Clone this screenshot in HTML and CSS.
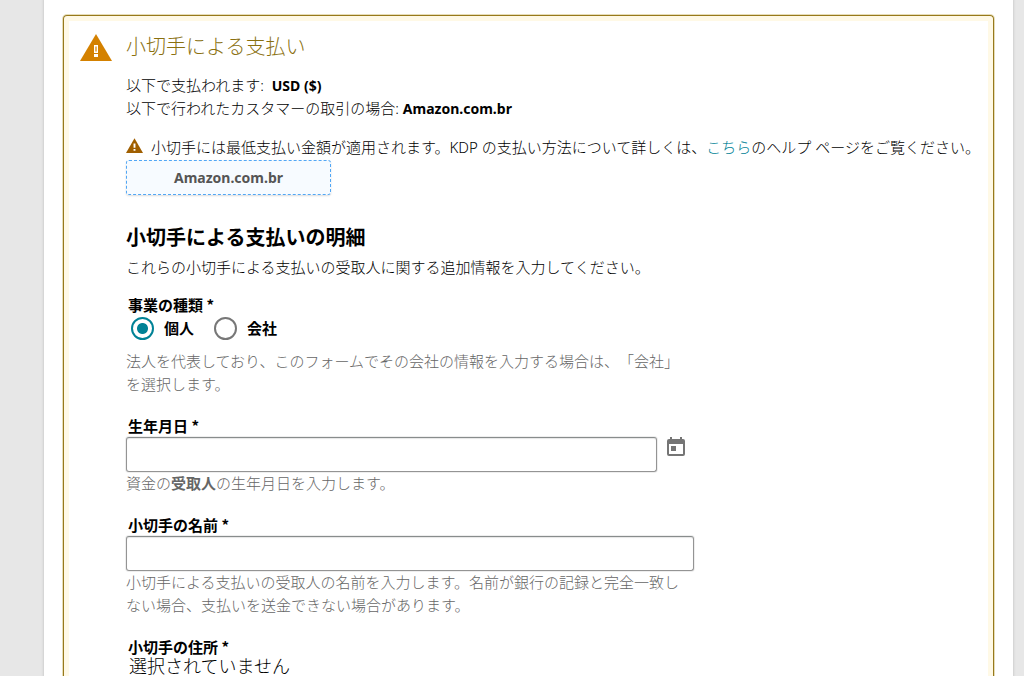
FILE: index.html
```html
<!DOCTYPE html>
<html lang="ja">
<head>
<meta charset="utf-8">
<meta name="viewport" content="width=device-width, initial-scale=1">
<title>小切手による支払い</title>
<link rel="stylesheet" href="styles.css">
</head>
<body>
<main class="sheet">
  <section class="card">
    <svg class="card-icon" viewBox="0 0 32 28" aria-hidden="true">
      <path class="amber" d="M16 0 32 27H0z"/>
      <path class="mark" fill-rule="evenodd" d="M14 11h4v8h-4zM15.4 12.5v5h1.2v-5zM14 20h4v3h-4z"/>
    </svg>
    <div class="content">
      <h1 class="title">小切手による支払い</h1>
      <p class="text">以下で支払われます:&nbsp; <strong>USD ($)</strong></p>
      <p class="text">以下で行われたカスタマーの取引の場合: <strong>Amazon.com.br</strong></p>
      <div class="notice">
        <svg class="notice-icon" viewBox="0 0 32 28" aria-hidden="true">
          <path class="brown" d="M16 0.5 32 28H0z"/>
          <path class="mark" d="M14.2 10h3.6v8h-3.6zM14.2 20.5h3.6V24h-3.6z"/>
        </svg>
        <p class="text">小切手には最低支払い金額が適用されます。KDP の支払い方法について詳しくは、<a class="link" href="#">こちら</a>のヘルプ ページをご覧ください。</p>
      </div>
      <div class="market">Amazon.com.br</div>

      <h2 class="subtitle">小切手による支払いの明細</h2>
      <p class="text">これらの小切手による支払いの受取人に関する追加情報を入力してください。</p>

      <form class="form">
        <div class="field" role="radiogroup" aria-labelledby="type-label">
          <span class="label" id="type-label">事業の種類 *</span>
          <div class="radios">
            <label class="option"><input class="radio" type="radio" name="type" checked>個人</label>
            <label class="option"><input class="radio" type="radio" name="type">会社</label>
          </div>
          <p class="hint">法人を代表しており、このフォームでその会社の情報を入力する場合は、「会社」を選択します。</p>
        </div>
        <div class="field">
          <label class="label" for="birth">生年月日 *</label>
          <div class="date-row">
            <input class="input" id="birth" type="text">
            <button class="calendar" type="button" aria-label="カレンダー">
              <svg class="calendar-icon" viewBox="0 0 18 20" aria-hidden="true">
                <path d="M3 0h2v2h8V0h2v2h1a2 2 0 0 1 2 2v13a2 2 0 0 1-2 2H2a2 2 0 0 1-2-2V4a2 2 0 0 1 2-2h1zM2 7v10h14V7zM4 9h5v5H4z" fill-rule="evenodd"/>
              </svg>
            </button>
          </div>
          <p class="hint">資金の<strong>受取人</strong>の生年月日を入力します。</p>
        </div>
        <div class="field">
          <label class="label" for="name">小切手の名前 *</label>
          <input class="input" id="name" type="text">
          <p class="hint">小切手による支払いの受取人の名前を入力します。名前が銀行の記録と完全一致しない場合、支払いを送金できない場合があります。</p>
        </div>
        <div class="field">
          <span class="label">小切手の住所 *</span>
          <p class="value">選択されていません</p>
        </div>
      </form>
    </div>
  </section>
</main>
</body>
</html>
```
FILE: styles.css
```css
* {
  box-sizing: border-box;
}

body {
  margin: 0;
  background: #e7e7e7;
  color: #000;
  font-family: "Noto Sans", "Noto Sans CJK JP", sans-serif;
  font-size: 15px;
  font-weight: 400;
  line-height: 23px;
  text-spacing-trim: space-all;
}

h1, h2, p {
  margin: 0;
}

.sheet {
  display: flex;
  flex-direction: column;
  min-height: 100vh;
  margin: 0 11px 0 44px;
  padding: 15px 19px 0;
  background: #fff;
  box-shadow: 0 0 2px 1px #cfcfcf;
}

.card {
  flex: 1;
  display: flex;
  gap: 14px;
  padding: 18px 7px 0 16px;
  border: 1px solid #97791b;
  border-bottom: 0;
  border-radius: 4px 4px 0 0;
  box-shadow: 0 0 0 1px #e6ddb9, inset 0 5px 0 #fff9e6, inset 5px 0 0 #fff9e6, inset -5px 0 0 #fff9e6;
}

.card-icon {
  flex: none;
  width: 32px;
  height: 28px;
}

.amber {
  fill: #d48100;
}

.brown {
  fill: #a05f00;
}

.mark {
  fill: #fff;
}

.content {
  flex: 1;
  min-width: 0;
}

.title {
  margin-bottom: 15px;
  color: #8a700f;
  font-size: 20px;
  font-weight: 300;
  line-height: 25px;
}

.text {
  font-weight: 300;
}

.text strong {
  font-size: 14px;
  font-weight: 700;
}

.notice {
  display: flex;
  gap: 8px;
  margin: 16px 0 1px;
}

.notice-icon {
  flex: none;
  width: 17px;
  height: 15px;
  margin-top: 2px;
}

.link {
  color: #008296;
  text-decoration: none;
}

.market {
  width: 205px;
  height: 35px;
  border: 1px dashed #52a7f5;
  border-radius: 3px;
  background: #f7fbff;
  box-shadow: 0 1px 2px #ddd;
  color: #555;
  font-size: 14px;
  font-weight: 700;
  line-height: 33px;
  text-align: center;
}

.subtitle {
  margin: 31px 0 6px;
  font-size: 20px;
  font-weight: 700;
  line-height: 24px;
}

.form {
  display: flex;
  flex-direction: column;
  gap: 19px;
  max-width: 568px;
  margin-top: 15px;
}

.label {
  display: block;
  padding-left: 2px;
  font-family: "Noto Sans CJK JP", sans-serif;
  font-size: 15px;
  font-weight: 700;
  line-height: 22px;
}

.radios {
  display: flex;
  gap: 20px;
  margin-bottom: 10px;
  padding-left: 5px;
}

.option {
  display: flex;
  align-items: center;
  gap: 10px;
  height: 24px;
  font-weight: 700;
}

.radio {
  appearance: none;
  width: 23px;
  height: 23px;
  margin: 0;
  border: 2px solid #777;
  border-radius: 50%;
  background: #fff;
}

.radio:checked {
  border-color: #008296;
  background: radial-gradient(circle, #008296 5px, #fff 6px);
}

.hint {
  color: #666;
  font-weight: 300;
}

.hint strong {
  font-weight: 700;
}

.input {
  display: block;
  width: 100%;
  height: 35px;
  padding: 0 8px;
  border: 1px solid #949494;
  border-top-color: #888c8c;
  border-radius: 3px;
  background: #fff;
  box-shadow: inset 0 1px 1px #e6e6e6, 0 0 0 1px #eee;
  font: inherit;
}

.date-row {
  display: flex;
  align-items: flex-start;
  gap: 10px;
  padding-right: 9px;
}

.calendar {
  flex: none;
  width: 18px;
  height: 20px;
  padding: 0;
  border: 0;
  background: none;
}

.calendar-icon {
  display: block;
  width: 18px;
  height: 20px;
  fill: #757575;
}

.value {
  padding-left: 3px;
  font-size: 18px;
  font-weight: 300;
  line-height: 16px;
}
```
